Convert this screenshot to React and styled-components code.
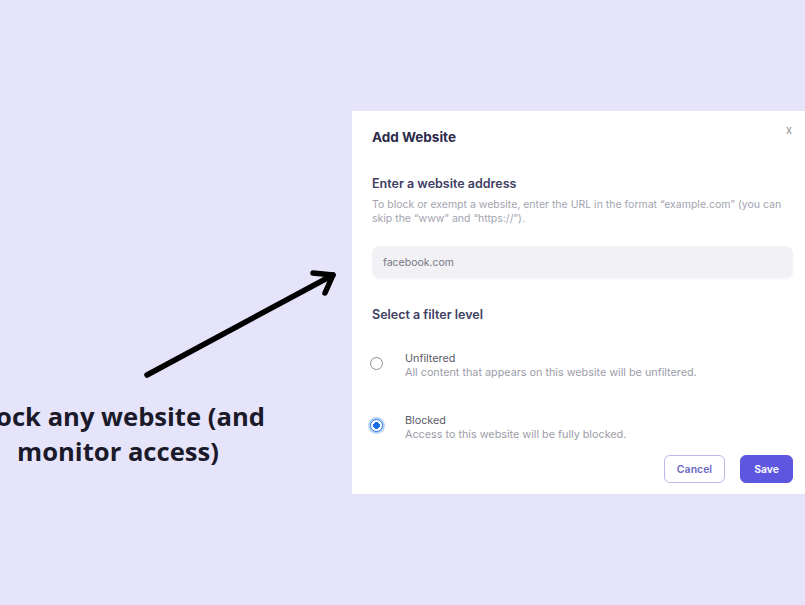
import React from 'react';
import styled, { createGlobalStyle } from 'styled-components';

const GlobalStyle = createGlobalStyle`
  html, body {
    margin: 0;
    padding: 0;
    background: #e6e4fa;
  }
  body {
    font-family: Inter, "Noto Sans", Arial, sans-serif;
    overflow: hidden;
  }
`;

const Stage = styled.div`
  width: 805px;
  height: 605px;
  display: flex;
  overflow: hidden;
  background: #e6e4fa;
`;

const LeftPane = styled.div`
  width: 352px;
  flex-shrink: 0;
  display: flex;
  flex-direction: column;
  align-items: flex-start;
  padding-top: 265px;
`;

const ArrowArt = styled.svg`
  display: block;
  margin-left: 140px;
`;

const Caption = styled.p`
  margin: 19px 0 0 -42px;
  width: 320px;
  text-align: center;
  font: 700 25.6px/35px "Open Sans", Lato, sans-serif;
  color: #1b1a2a;
  white-space: nowrap;
`;

const Card = styled.section`
  margin-top: 111px;
  width: 453px;
  height: 383px;
  flex-shrink: 0;
  box-sizing: border-box;
  background: #fff;
  padding: 16px 12px 11px 20px;
  display: flex;
  flex-direction: column;
`;

const Header = styled.div`
  display: flex;
  justify-content: space-between;
  align-items: flex-start;
`;

const Title = styled.h2`
  margin: 0;
  font-size: 13.5px;
  line-height: 20px;
  font-weight: 700;
  color: #2b2a4a;
`;

const Close = styled.button`
  border: 0;
  background: none;
  padding: 0;
  margin: -5px -3px 0 0;
  width: 14px;
  font: 400 11px/16px Inter, sans-serif;
  color: #8e8e96;
  cursor: pointer;
`;

const Heading = styled.h3`
  margin: ${({ $top }) => $top}px 0 0;
  font-size: 12.5px;
  line-height: 18px;
  font-weight: 600;
  color: #403e63;
`;

const Hint = styled.p`
  margin: 5px 0 0;
  font-size: 10.5px;
  line-height: 14px;
  color: #a3a3b0;
`;

const Input = styled.input`
  margin-top: 20px;
  height: 32px;
  box-sizing: border-box;
  width: 100%;
  border: 0;
  border-radius: 8px;
  background: #f1f1f6;
  box-shadow: 0 1px 2px rgba(40, 40, 80, 0.06);
  padding: 0 11px;
  font: 400 10.5px Inter, sans-serif;
  color: #77777f;
  outline: none;
`;

const Option = styled.label`
  margin-top: ${({ $top }) => $top}px;
  display: flex;
  align-items: flex-start;
  gap: 22px;
  cursor: pointer;
`;

const Radio = styled.span`
  width: 13px;
  height: 13px;
  margin: 6px 0 0 -2px;
  flex-shrink: 0;
  box-sizing: border-box;
  border-radius: 50%;
  border: 1.5px solid ${({ $on }) => ($on ? '#1a6fe6' : '#8e8e94')};
  background: ${({ $on }) => ($on ? 'radial-gradient(circle, #1a6fe6 0 3.2px, #fff 3.6px)' : '#fff')};
  box-shadow: ${({ $on }) => ($on ? '0 0 0 2px #b9d3f7' : 'none')};
`;

const OptionText = styled.div`
  display: flex;
  flex-direction: column;
`;

const OptionLabel = styled.span`
  font-size: 10.8px;
  line-height: 15px;
  color: #5a5a66;
`;

const OptionDesc = styled.span`
  font-size: 10.8px;
  line-height: 14px;
  color: #9c9ca8;
`;

const Actions = styled.div`
  margin-top: 13px;
  display: flex;
  justify-content: flex-end;
  gap: 15px;
`;

const Button = styled.button`
  height: 28px;
  box-sizing: border-box;
  border-radius: 6px;
  font: 600 10.5px Inter, sans-serif;
  cursor: pointer;
  padding: 0 ${({ $primary }) => ($primary ? 13 : 12)}px;
  border: 1.5px solid ${({ $primary }) => ($primary ? '#5c56e0' : '#bcb8e8')};
  background: ${({ $primary }) => ($primary ? '#5c56e0' : '#fff')};
  color: ${({ $primary }) => ($primary ? '#fff' : '#6c68c4')};
`;

const options = [
  { label: 'Unfiltered', desc: 'All content that appears on this website will be unfiltered.', top: 27, on: false },
  { label: 'Blocked', desc: 'Access to this website will be fully blocked.', top: 33, on: true },
];

export default function App() {
  return (
    <>
      <GlobalStyle />
      <Stage>
        <LeftPane>
          <ArrowArt width="200" height="115" viewBox="0 0 200 115">
            <g stroke="#000" strokeWidth="5.5" strokeLinecap="round" strokeLinejoin="round" fill="none">
              <line x1="7" y1="110" x2="193" y2="10" />
              <polyline points="173,8 193,10 185,28" />
            </g>
          </ArrowArt>
          <Caption>
            Block any website (and
            <br />
            monitor access)
          </Caption>
        </LeftPane>
        <Card>
          <Header>
            <Title>Add Website</Title>
            <Close aria-label="Close">x</Close>
          </Header>
          <Heading $top={28}>Enter a website address</Heading>
          <Hint>
            To block or exempt a website, enter the URL in the format “example.com” (you can
            <br />
            skip the “www” and “https://”).
          </Hint>
          <Input defaultValue="facebook.com" />
          <Heading $top={28}>Select a filter level</Heading>
          {options.map((o) => (
            <Option key={o.label} $top={o.top}>
              <Radio $on={o.on} />
              <OptionText>
                <OptionLabel>{o.label}</OptionLabel>
                <OptionDesc>{o.desc}</OptionDesc>
              </OptionText>
            </Option>
          ))}
          <Actions>
            <Button>Cancel</Button>
            <Button $primary>Save</Button>
          </Actions>
        </Card>
      </Stage>
    </>
  );
}
